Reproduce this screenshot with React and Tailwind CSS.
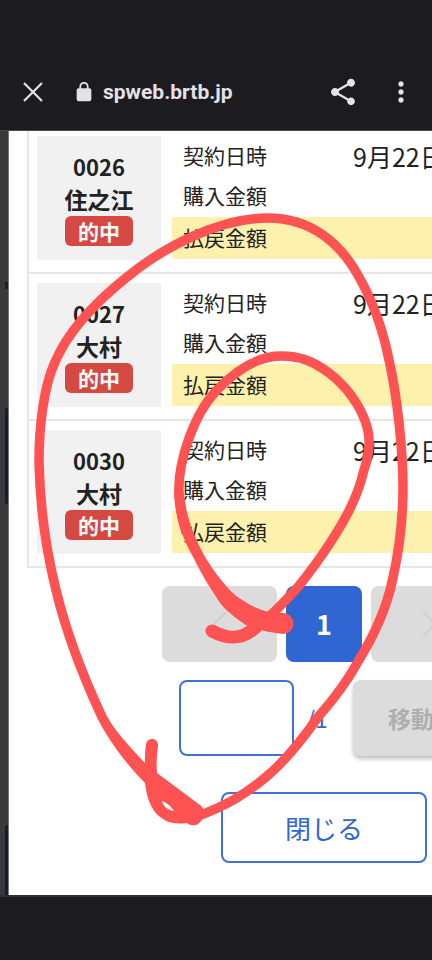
import { MdMoreVert, MdShare } from "react-icons/md";

const tickets = [
  { no: "0026", venue: "住之江", status: "的中", date: "9月22日" },
  { no: "0027", venue: "大村", status: "的中", date: "9月22日" },
  { no: "0030", venue: "大村", status: "的中", date: "9月22日" },
];

const BrowserBar = () => (
  <header className="shrink-0 border-b border-[#4a4950] bg-[#1c1b20] pt-[54px] text-[#e4e1e8]">
    <div className="flex h-[76px] items-center pr-[15px] pl-[23px]">
      <button type="button" aria-label="Close tab">
        <svg width="20" height="20" viewBox="0 0 20 20" fill="none" stroke="currentColor" strokeWidth="2.2">
          <path d="M1 1L19 19M19 1L1 19" />
        </svg>
      </button>
      <svg className="ml-[30px]" width="22" height="22" viewBox="0 0 24 24" fill="currentColor">
        <path d="M18 8h-1V6c0-2.760-2.240-5-5-5S7 3.240 7 6v2H6c-1.100 0-2 .9-2 2v10c0 1.100.9 2 2 2h12c1.100 0 2-.9 2-2V10c0-1.100-.9-2-2-2zM8.900 8V6c0-1.710 1.390-3.100 3.100-3.100s3.100 1.390 3.100 3.100v2z" />
      </svg>
      <span className="ml-2 flex-1 font-[Roboto,sans-serif] text-[21px] leading-7 font-bold">
        spweb.brtb.jp
      </span>
      <div className="flex items-center gap-[26px]">
        <button type="button" aria-label="Share">
          <MdShare size={32} />
        </button>
        <button type="button" aria-label="More">
          <MdMoreVert size={32} />
        </button>
      </div>
    </div>
  </header>
);

// Slice of the dimmed page that stays visible beside the dialog
const DimmedPage = () => (
  <div className="flex w-[9px] shrink-0 flex-col items-end border-r border-[#777] bg-[#393939]">
    <div className="mt-[151px] h-[7px] w-[3px] bg-[#10203f]" />
    <div className="mt-[119px] h-24 w-[3px] rounded-l-md border-l-2 border-[#0f1c38] bg-[#18202e]" />
    <div className="mt-[321px] w-[3px] flex-1 rounded-tl-md border-l-2 border-[#0f1c38] bg-[#18202e]" />
  </div>
);

const TicketRow = ({ ticket }) => (
  <li className="flex gap-[11px] border-b-2 border-[#e6e6e6] px-2 pt-[9px] pb-3">
    <div className="flex h-[124px] w-[124px] flex-col items-center bg-[#f1f1f1] pt-[14px] text-[23px] leading-[33px] font-bold">
      <span className="text-[22px]">{ticket.no}</span>
      <span>{ticket.venue}</span>
      <span className="w-[68px] rounded-md bg-[#d44942] text-center text-[21px] leading-[30px] text-white">
        {ticket.status}
      </span>
    </div>
    <dl className="flex-1 text-[21px]">
      <div className="flex h-10 items-center px-[11px]">
        <dt className="w-[170px]">契約日時</dt>
        <dd className="text-[25px] leading-8">{ticket.date}</dd>
      </div>
      <div className="flex h-[39px] items-center px-[11px]">
        <dt>購入金額</dt>
      </div>
      <div className="mt-[2px] flex h-[42px] items-center bg-[#fdf1ad] px-[11px]">
        <dt>払戻金額</dt>
      </div>
    </dl>
  </li>
);

const Pager = () => (
  <nav className="flex justify-center gap-[9px]">
    <button
      type="button"
      disabled
      aria-label="Previous page"
      className="flex h-[76px] w-[115px] items-center justify-center rounded-lg bg-[#dcdcdc] text-[#cfcfcf]"
    >
      <svg width="14" height="26" viewBox="0 0 14 26" fill="none" stroke="currentColor" strokeWidth="2">
        <path d="M13 1L1 13L13 25" />
      </svg>
    </button>
    <button type="button" className="h-[76px] w-[76px] rounded-lg bg-[#3066d2] text-[27px] font-bold text-white">
      1
    </button>
    <button
      type="button"
      disabled
      aria-label="Next page"
      className="flex h-[76px] w-[115px] items-center justify-center rounded-lg bg-[#dcdcdc] text-[#cfcfcf]"
    >
      <svg width="14" height="26" viewBox="0 0 14 26" fill="none" stroke="currentColor" strokeWidth="2">
        <path d="M1 1L13 13L1 25" />
      </svg>
    </button>
  </nav>
);

const BetListDialog = () => (
  <main className="w-[630px] shrink-0 bg-white px-[18px] text-[#222]">
    <ul className="-mt-1 border-x-2 border-[#e6e6e6]">
      {tickets.map((ticket) => (
        <TicketRow key={ticket.no} ticket={ticket} />
      ))}
    </ul>

    <div className="mt-[18px]">
      <Pager />
    </div>

    <form className="mt-[18px] flex items-center justify-center" onSubmit={(e) => e.preventDefault()}>
      <input
        id="page"
        type="text"
        className="h-[76px] w-[115px] rounded-lg border-2 border-[#3f72d6] bg-white px-3 text-[22px]"
      />
      <label htmlFor="page" className="w-[59px] pl-3 text-[23px] text-[#3066d2]">
        /1
      </label>
      <button
        type="button"
        disabled
        className="h-[76px] w-[116px] rounded-lg bg-[#dcdcdc] text-[23px] font-bold text-[#aeaeae] shadow-[0_3px_4px_rgba(0,0,0,0.25)]"
      >
        移動
      </button>
    </form>

    <div className="mt-9 flex justify-center">
      <button
        type="button"
        className="h-[71px] w-[206px] rounded-lg border-2 border-[#3f72d6] text-[26px] text-[#3066d2]"
      >
        閉じる
      </button>
    </div>
  </main>
);

// Freehand marker strokes drawn over the whole screen
const MarkerStrokes = () => (
  <svg
    className="pointer-events-none absolute top-0 left-0"
    width="432"
    height="960"
    viewBox="0 0 432 960"
    fill="none"
    stroke="#ff5252"
    strokeWidth="9.5"
    strokeLinecap="round"
    strokeLinejoin="round"
  >
    <path d="M198 816C225 806 243 796 266 777C284 762 302 740 318 717C335 698 348 680 359 660C373 637 386 610 392 582C399 552 403 518 403 487C403 450 397 395 389 360C383 330 372 300 359 277C340 242 310 218 268 218C220 218 165 246 127 277C92 305 67 334 55 362C44 386 39 425 39 462C40 508 46 550 56 590C66 632 82 674 102 717C112 737 128 756 148 773" />
    <path
      d="M97 716C105 734 122 760 145 783C147 802 154 814 163 819C170 824 180 824 187 823C193 828 202 825 204 814C204 810 203 807 200 805L157 773C156 762 157 755 158 746A6 6 0 0 0 146 744C145 752 145 757 145 763C128 745 115 731 106 715ZM162 801C168 803 172 808 174 811C167 810 163 806 162 801Z"
      fill="#ff5252"
      fillRule="evenodd"
      stroke="none"
    />
    <path d="M254 629C268 619 280 607 298 587C310 572 321 557 330 543C343 523 357 500 364 470C369 455 371 440 367 427C361 405 345 385 329 373C313 361 300 356 281 356C258 356 236 370 216 391C203 405 196 420 189 438C182 458 178 475 179 493C180 508 182 520 186 532" />
    <path d="M212 631C225 638 240 642 256 627" strokeWidth="13" />
    <path
      d="M174 493C175 515 181 535 192 555C199 569 206 582 213 592C218 600 223 608 230 613C236 618 243 624 250 627C262 631 274 633 283 634A10.500 10.500 0 0 0 283 613C279 613 274 613 270 612C262 611 254 607 247 603C240 599 233 594 227 587C220 579 213 570 207 560C197 543 186 520 184 493Z"
      fill="#ff5252"
      stroke="none"
    />
  </svg>
);

const App = () => {
  return (
    <div
      lang="ja"
      className="relative flex min-h-screen flex-col overflow-hidden bg-[#1c1b20] font-['Noto_Sans_CJK_JP',sans-serif]"
    >
      <BrowserBar />
      <div className="flex flex-1 overflow-hidden">
        <DimmedPage />
        <BetListDialog />
      </div>
      <footer className="h-[65px] shrink-0 border-t-2 border-[#303035] bg-[#1c1b20]" />
      <MarkerStrokes />
    </div>
  );
};

export default App;
